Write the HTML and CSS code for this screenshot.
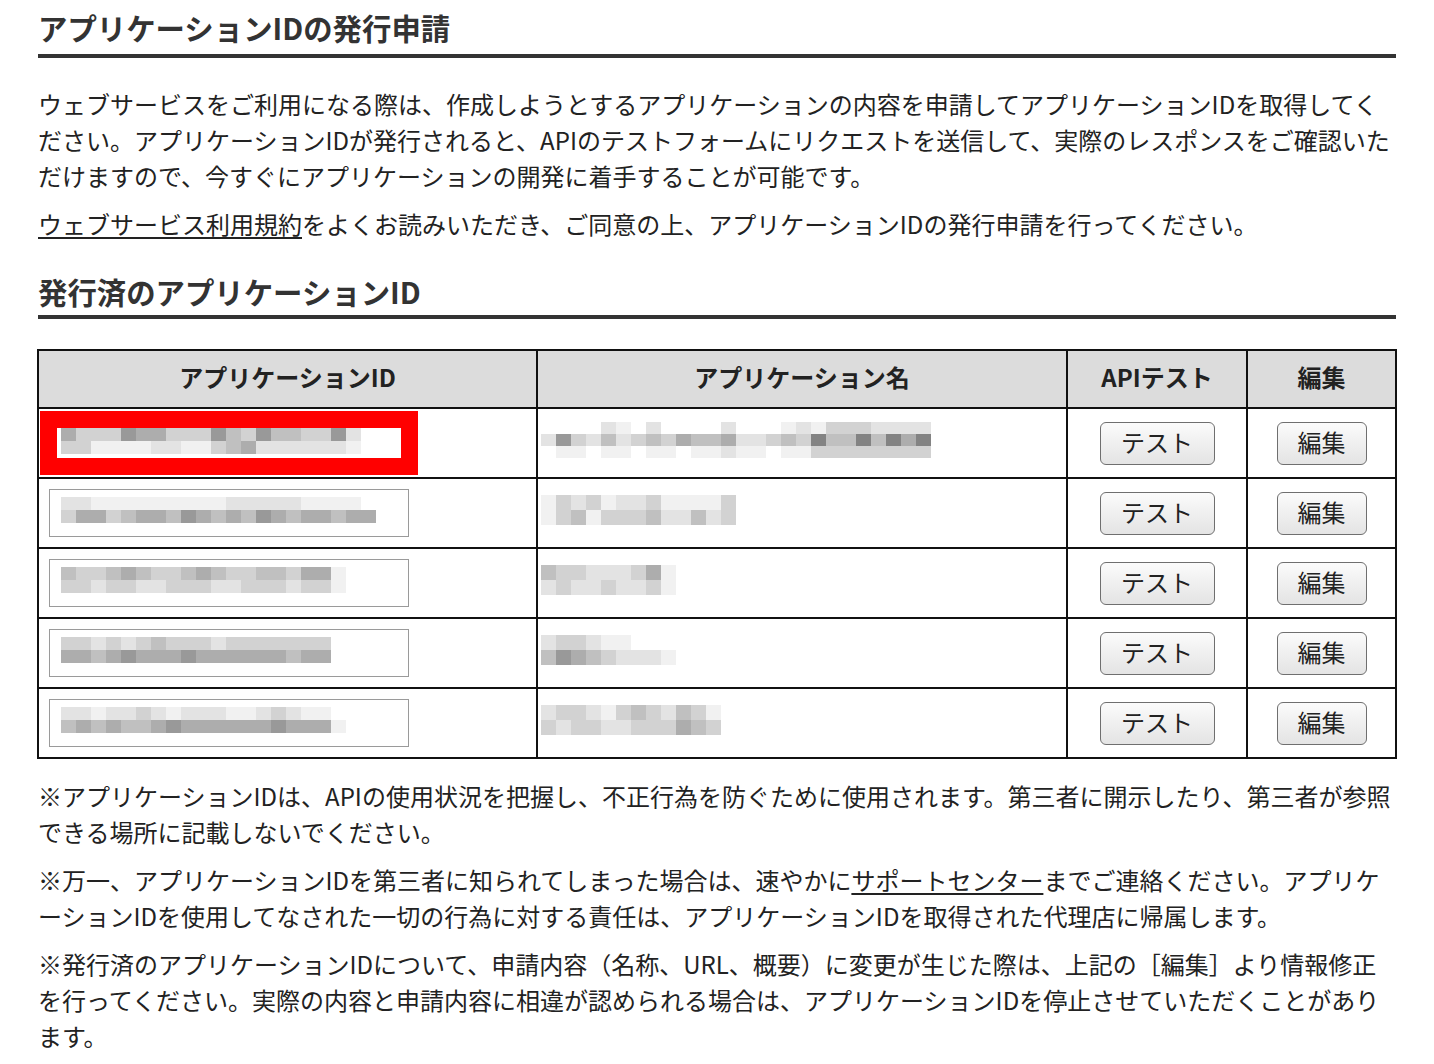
FILE: index.html
```html
<!DOCTYPE html>
<html lang="ja">
<head>
<meta charset="utf-8">
<title>アプリケーションIDの発行申請</title>
<link rel="stylesheet" href="styles.css">
<script src="script.js" defer></script>
</head>
<body>
<div class="page">
  <h1 class="heading heading-first">アプリケーションIDの発行申請</h1>
  <p class="text text-lead">ウェブサービスをご利用になる際は、作成しようとするアプリケーションの内容を申請してアプリケーションIDを取得してください。アプリケーションIDが発行されると、APIのテストフォームにリクエストを送信して、実際のレスポンスをご確認いただけますので、今すぐにアプリケーションの開発に着手することが可能です。</p>
  <p class="text"><a class="link" href="#">ウェブサービス利用規約</a>をよくお読みいただき、ご同意の上、アプリケーションIDの発行申請を行ってください。</p>

  <h2 class="heading heading-second">発行済のアプリケーションID</h2>

  <table class="apps">
    <thead>
      <tr>
        <th class="col-id">アプリケーションID</th>
        <th class="col-name">アプリケーション名</th>
        <th class="col-test">APIテスト</th>
        <th class="col-edit">編集</th>
      </tr>
    </thead>
    <tbody>
      <tr>
        <td class="cell-id">
          <div class="idbox"><div class="pix" data-p="53336553336436443362/33111122113452222221"></div></div>
          <div class="mark"></div>
        </td>
        <td class="cell-name"><div class="pix pix-sm" data-p="00002102000020001213332222/26324234354452234374474757/01101101101121101133333333"></div></td>
        <td class="cell-btn"><button class="btn btn-test" type="button">テスト</button></td>
        <td class="cell-btn"><button class="btn btn-edit" type="button">編集</button></td>
      </tr>
      <tr>
        <td class="cell-id">
          <div class="idbox"><div class="pix" data-p="221111111112222211110/355345546545465455455"></div></div>
        </td>
        <td class="cell-name"><div class="pix pix-lg" data-p="1323122311113/1341333422423"></div></td>
        <td class="cell-btn"><button class="btn btn-test" type="button">テスト</button></td>
        <td class="cell-btn"><button class="btn btn-edit" type="button">編集</button></td>
      </tr>
      <tr>
        <td class="cell-id">
          <div class="idbox"><div class="pix" data-p="4334543345433443551/3323322333223332331"></div></div>
        </td>
        <td class="cell-name"><div class="pix pix-lg" data-p="433222351/232232231"></div></td>
        <td class="cell-btn"><button class="btn btn-test" type="button">テスト</button></td>
        <td class="cell-btn"><button class="btn btn-edit" type="button">編集</button></td>
      </tr>
      <tr>
        <td class="cell-id">
          <div class="idbox"><div class="pix" data-p="3323234333233333330/5545655565555554550"></div></div>
        </td>
        <td class="cell-name"><div class="pix pix-lg" data-p="233211000/465432221"></div></td>
        <td class="cell-btn"><button class="btn btn-test" type="button">テスト</button></td>
        <td class="cell-btn"><button class="btn btn-edit" type="button">編集</button></td>
      </tr>
      <tr>
        <td class="cell-id">
          <div class="idbox"><div class="pix" data-p="2212232122211232110/4545445655555565551"></div></div>
        </td>
        <td class="cell-name"><div class="pix pix-lg" data-p="233213432431/323322333543"></div></td>
        <td class="cell-btn"><button class="btn btn-test" type="button">テスト</button></td>
        <td class="cell-btn"><button class="btn btn-edit" type="button">編集</button></td>
      </tr>
    </tbody>
  </table>

  <p class="text text-note">※アプリケーションIDは、APIの使用状況を把握し、不正行為を防ぐために使用されます。第三者に開示したり、第三者が参照できる場所に記載しないでください。</p>
  <p class="text">※万一、アプリケーションIDを第三者に知られてしまった場合は、速やかに<a class="link" href="#">サポートセンター</a>までご連絡ください。アプリケーションIDを使用してなされた一切の行為に対する責任は、アプリケーションIDを取得された代理店に帰属します。</p>
  <p class="text">※発行済のアプリケーションIDについて、申請内容（名称、URL、概要）に変更が生じた際は、上記の［編集］より情報修正を行ってください。実際の内容と申請内容に相違が認められる場合は、アプリケーションIDを停止させていただくことがあります。</p>
</div>
</body>
</html>
```

FILE: styles.css
```css
html, body {
  margin: 0;
  padding: 0;
  background: #ffffff;
}

body {
  font-family: "Noto Sans CJK JP", "Noto Sans", "Liberation Sans", sans-serif;
  color: #222222;
}

.page {
  padding: 0 38px;
}

.heading {
  margin: 0;
  font-size: 29.4px;
  font-weight: 700;
  line-height: 40px;
  color: #333333;
  border-bottom: 4px solid #333333;
}

.heading-first {
  padding-top: 7px;
  padding-bottom: 7px;
}

.heading-second {
  margin-top: 29px;
  padding-bottom: 4px;
}

.text {
  margin: 12px 0 0;
  font-size: 24px;
  line-height: 36px;
}

.text-lead {
  margin-top: 28px;
}

.text-note {
  margin-top: 19px;
}

.link {
  color: #222222;
  text-decoration: underline;
  text-underline-offset: 3px;
}

.apps {
  margin-top: 30px;
  margin-left: -1px;
  width: calc(100% + 1px);
  border-collapse: collapse;
  border: 2px solid #111111;
  table-layout: fixed;
}

.apps th,
.apps td {
  border: 2px solid #111111;
  padding: 0;
}

.apps th {
  height: 51px;
  padding-bottom: 5px;
  box-sizing: content-box;
  background: #dcdcdc;
  font-size: 24px;
  font-weight: 700;
  color: #222222;
  text-align: center;
}

.col-id { width: 497px; }
.col-name { width: 528px; }
.col-test { width: 178px; }
.col-edit { width: 147px; }

.apps td {
  height: 68px;
  vertical-align: middle;
}

.cell-id {
  position: relative;
}

.idbox {
  box-sizing: border-box;
  width: 360px;
  height: 48px;
  margin-left: 10px;
  border: 1px solid #9a9a9a;
  background: #ffffff;
  padding: 7px 0 0 11px;
}

.mark {
  position: absolute;
  left: 1px;
  top: 2px;
  width: 344px;
  height: 30px;
  border: 17px solid #ff0000;
  background: transparent;
  pointer-events: none;
}

.cell-id:has(.mark) .idbox {
  border-color: transparent;
  padding-top: 8px;
}

.cell-name .pix {
  margin-left: 3px;
  margin-bottom: 6px;
}

.pix-row {
  display: flex;
}

.pix .px {
  display: block;
  width: 15px;
  height: 13px;
}

.pix-sm .px {
  height: 12px;
}

.pix-lg .px {
  height: 15px;
}

.px.s0 { background: transparent; }
.px.s1 { background: #f1f1f1; }
.px.s2 { background: #e3e3e3; }
.px.s3 { background: #d2d2d2; }
.px.s4 { background: #c0c0c0; }
.px.s5 { background: #adadad; }
.px.s6 { background: #999999; }
.px.s7 { background: #838383; }

.cell-btn {
  text-align: center;
}

.btn {
  box-sizing: border-box;
  height: 43px;
  padding: 0 0 2px;
  font-family: "Noto Sans CJK JP", "Noto Sans", sans-serif;
  font-size: 24px;
  line-height: 1;
  color: #222222;
  border: 1.5px solid #6f6f6f;
  border-radius: 6px;
  background: linear-gradient(#fbfbfb, #e4e4e4);
  cursor: pointer;
}

.btn-test {
  width: 115px;
}

.btn-edit {
  width: 90px;
}
```

FILE: script.js
```js
document.querySelectorAll('.pix').forEach(function (el) {
  el.dataset.p.split('/').forEach(function (rowData) {
    var row = document.createElement('div');
    row.className = 'pix-row';
    rowData.split('').forEach(function (c) {
      var s = document.createElement('span');
      s.className = 'px s' + c;
      row.appendChild(s);
    });
    el.appendChild(row);
  });
});
```
